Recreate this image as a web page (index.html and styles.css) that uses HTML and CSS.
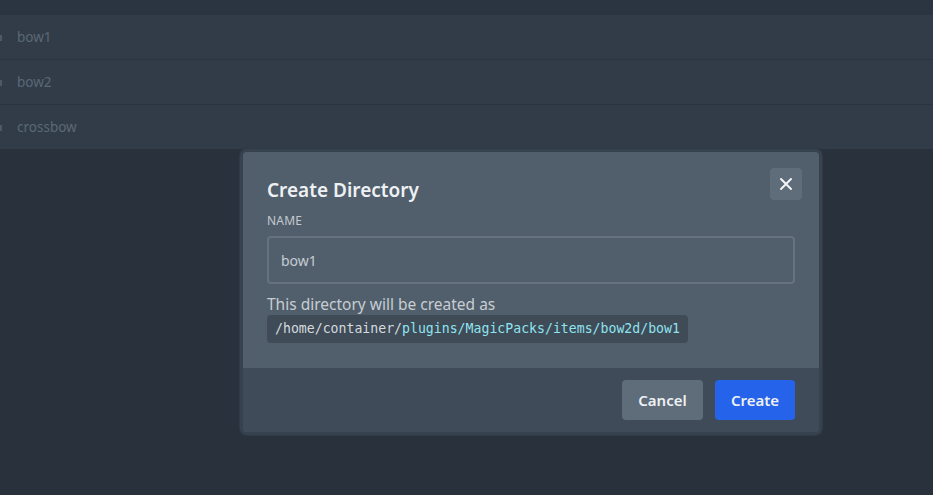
FILE: index.html
```html
<!DOCTYPE html>
<html>
<head>
<meta charset="utf-8">
<link rel="stylesheet" href="styles.css">
</head>
<body>
<div class="page">
  <div class="topband"></div>
  <div class="list">
    <div class="row"><span class="ico"></span><span class="name">bow1</span></div>
    <div class="row"><span class="ico"></span><span class="name">bow2</span></div>
    <div class="row"><span class="ico"></span><span class="name">crossbow</span></div>
  </div>
</div>
<div class="modal">
  <button class="close" aria-label="Close">
    <svg width="14" height="14" viewBox="0 0 14 14"><path d="M2 2L12 12M12 2L2 12" stroke="#f3f4f6" stroke-width="2" stroke-linecap="round"/></svg>
  </button>
  <div class="modal-body">
    <h2 class="title">Create Directory</h2>
    <label class="label">NAME</label>
    <div class="input">bow1</div>
    <p class="hint">This directory will be created as</p>
    <code class="path">/home/container/<span class="hl">plugins/MagicPacks/items/bow2d/bow1</span></code>
  </div>
  <div class="modal-foot">
    <button class="btn cancel">Cancel</button>
    <button class="btn create">Create</button>
  </div>
</div>
</body>
</html>
```
FILE: styles.css
```css
* { box-sizing: border-box; }
html, body { margin: 0; padding: 0; }
body {
  width: 933px;
  height: 495px;
  background: #29323c;
  font-family: "Noto Sans", "Open Sans", sans-serif;
  overflow: hidden;
  position: relative;
}
.topband { height: 15px; background: #2b3541; }
.list { display: flex; flex-direction: column; }
.row {
  height: 45px;
  background: #313c48;
  border-bottom: 1px solid #2a3440;
  display: flex;
  align-items: center;
  position: relative;
}
.row:last-child { border-bottom: none; height: 44px; }
.ico {
  width: 2px; height: 6px; background: #4c5967; margin-right: 15px; margin-top: 2px;
}
.name { color: #5b6876; font-size: 13.5px; }

.modal {
  position: absolute;
  left: 243px;
  top: 152px;
  width: 576px;
  height: 280px;
  background: #515f6c;
  border-radius: 4px;
  box-shadow: 0 0 0 3px #36424e, 0 0 0 4px #2f3a46;
  display: flex;
  flex-direction: column;
  overflow: hidden;
}
.close {
  position: absolute;
  right: 17px;
  top: 16px;
  width: 32px;
  height: 32px;
  border: none;
  border-radius: 4px;
  background: #5f6c79;
  display: flex;
  align-items: center;
  justify-content: center;
  padding: 0;
}
.modal-body { padding: 24px 24px 0 24px; flex: 1; display: flex; flex-direction: column; align-items: flex-start; }
.title {
  margin: 0;
  font-size: 19px;
  line-height: 28px;
  font-weight: 600;
  color: #eef1f4;
}
.label {
  margin-top: 9px;
  font-size: 12px;
  line-height: 16px;
  color: #c3c9d0;
  letter-spacing: 0.2px;
}
.input {
  margin-top: 7px;
  width: 528px;
  height: 48px;
  border: 2px solid #66737f;
  border-radius: 4px;
  background: #515f6c;
  color: #c5ccd3;
  font-size: 14px;
  display: flex;
  align-items: center;
  padding-left: 12px;
}
.hint {
  margin: 9px 0 0 0;
  font-size: 15.5px;
  line-height: 22px;
  color: #c7cdd3;
}
.path {
  margin-top: 0px;
  display: inline-block;
  background: #3f4b57;
  border-radius: 4px;
  padding: 4px 8px;
  font-family: "DejaVu Sans Mono", "Liberation Mono", monospace;
  font-size: 13.2px;
  line-height: 20px;
  color: #d5dade;
}
.hl { color: #8fe3ef; }
.modal-foot {
  height: 64px;
  background: #3f4b58;
  display: flex;
  justify-content: flex-end;
  align-items: center;
  gap: 12px;
  padding: 0 24px;
}
.btn {
  height: 40px;
  border: none;
  border-radius: 4px;
  font-family: "Noto Sans", "Open Sans", sans-serif;
  font-size: 15px;
  font-weight: 600;
  color: #eef1f4;
  padding: 0;
}
.cancel { width: 81px; background: #5f6c7a; }
.create { width: 80px; background: #2563eb; }
```
